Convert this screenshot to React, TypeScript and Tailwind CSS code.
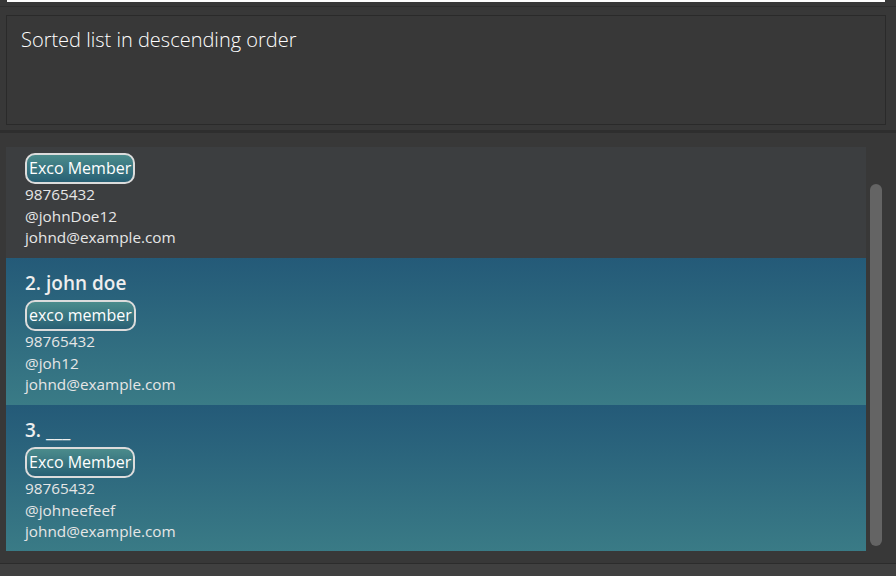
import React, { useEffect, useRef } from 'react'

type Person = {
  name: string
  tag: string
  phone: string
  handle: string
  email: string
}

const people: Person[] = [
  { name: '1. John Doe', tag: 'Exco Member', phone: '98765432', handle: '@johnDoe12', email: 'johnd@example.com' },
  { name: '2. john doe', tag: 'exco member', phone: '98765432', handle: '@joh12', email: 'johnd@example.com' },
  { name: '3. ___', tag: 'Exco Member', phone: '98765432', handle: '@johneefeef', email: 'johnd@example.com' },
]

function PersonCard({ p, selected }: { p: Person; selected: boolean }) {
  return (
    <div
      className={
        'h-[147px] pl-[19px] pt-[13px] text-[#e6e6e6] ' +
        (selected ? 'bg-gradient-to-b from-[#245a78] to-[#3a7b86]' : 'bg-[#3c3e40]')
      }
    >
      <div className="text-[19px] font-semibold leading-[24px] text-[#eeeeee]">{p.name}</div>
      <div className="mt-[5px] flex">
        <span className="rounded-[10px] border-2 border-[#dcdcdc] bg-gradient-to-b from-[#4b8c8c] to-[#286074] px-[2px] text-[16px] leading-[27px] text-white">
          {p.tag}
        </span>
      </div>
      <div className="-mt-[1px] text-[15.3px] leading-[22px]">{p.phone}</div>
      <div className="text-[15.3px] leading-[22px]">{p.handle}</div>
      <div className="text-[15.3px] leading-[21px]">{p.email}</div>
    </div>
  )
}

export default function App() {
  const listRef = useRef<HTMLDivElement>(null)

  useEffect(() => {
    if (listRef.current) listRef.current.scrollTop = 36
  }, [])

  return (
    <div
      className="flex h-[576px] w-[896px] flex-col overflow-hidden bg-[#383838]"
      style={{ fontFamily: '"Open Sans", "Noto Sans", sans-serif' }}
    >
      {/* command box bottom edge */}
      <div className="h-[7px] border-b border-[#2f2f2f] px-[7px]">
        <div className="h-[2px] w-[878px] bg-white" />
      </div>

      {/* result display */}
      <div className="px-[6px] pt-[8px]">
        <div className="h-[110px] w-[880px] border border-[#2a2a2a] bg-[#383838] px-[14px] pt-[10px]">
          <p className="text-[20px] font-light leading-[28px] text-white">Sorted list in descending order</p>
        </div>
      </div>

      <div className="mt-[5px] h-[3px] bg-[#2e2e2e]" />

      {/* person list */}
      <div className="flex h-[430px] pl-[6px] pt-[14px]">
        <div ref={listRef} className="h-[404px] w-[860px] overflow-hidden">
          {people.map((p, i) => (
            <PersonCard key={i} p={p} selected={i > 0} />
          ))}
        </div>
        <div className="ml-[4px] pt-[37px]">
          <div className="h-[362px] w-[12px] rounded-[6px] bg-[#646464]" />
        </div>
      </div>

      <div className="h-[1px] bg-[#2c2c2c]" />
      <div className="flex-1 bg-[#404040]" />
    </div>
  )
}
